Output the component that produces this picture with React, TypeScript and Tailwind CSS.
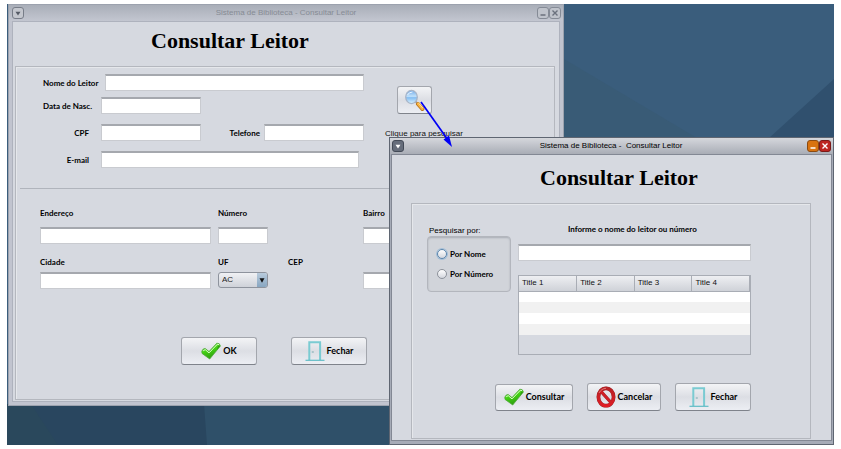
import type { ReactNode } from "react";

const sans = "font-['Liberation_Sans',Arial,sans-serif]";
const field =
  "block h-[17px] min-w-0 border border-t-2 border-[#c9cbd0] border-t-[#a5a8ae] bg-white px-1 text-[8px] text-black outline-none";
const pushButton =
  "flex items-center justify-center rounded-[3px] border border-[#a3a6ad] border-b-[#7f838b] bg-linear-to-b from-[#f3f4f6] via-[#dcdee4] to-[#eceef3] text-[9px] font-bold text-black";

function Check() {
  return (
    <svg viewBox="0 0 20 18" className="h-[18px] w-5 shrink-0" aria-hidden="true">
      <defs>
        <linearGradient id="leaf" x1="0" y1="0" x2="0.4" y2="1">
          <stop offset="0" stopColor="#a5ee7e" />
          <stop offset="0.5" stopColor="#43d413" />
          <stop offset="1" stopColor="#2e9c10" />
        </linearGradient>
      </defs>
      <path
        d="M.8 9.2Q1.6 6.6 4.1 6.4L8 9.6 15.8 1.2Q18.8 .8 19.4 4L8.7 17 1 11.4Z"
        fill="url(#leaf)"
        stroke="#4fa83b"
        strokeWidth=".8"
        strokeLinejoin="round"
      />
      <path d="M2.2 8.8 4.2 7.6 8 10.9 16.3 2.3 18 2.6" fill="none" stroke="#d9ffc6" strokeWidth="1" />
      <path d="M19.2 4 16 7.8 17 3.4Z" fill="#23790f" opacity=".6" />
    </svg>
  );
}

function Door() {
  return (
    <svg viewBox="0 0 20 20" className="size-5 shrink-0" fill="none" aria-hidden="true">
      <path d="M4.3 19V1.2h10.8V19" stroke="#7acbd2" strokeWidth="2" />
      <path d="M.5 19.3h19" stroke="#5fbcc5" strokeWidth="1.2" />
      <path d="M6.8 11h2" stroke="#5d9ba2" strokeWidth=".8" />
    </svg>
  );
}

function Forbidden() {
  return (
    <svg viewBox="0 0 20 22" className="h-[22px] w-5 shrink-0" fill="none" aria-hidden="true">
      <defs>
        <linearGradient id="red" x1="0" y1="0" x2="0" y2="1">
          <stop offset="0" stopColor="#b82226" />
          <stop offset="1" stopColor="#e01c24" />
        </linearGradient>
      </defs>
      <ellipse cx="10" cy="11" rx="7.6" ry="8.7" stroke="#9c2226" strokeWidth="3.8" />
      <path d="M4.8 5.2 15.2 16.8" stroke="#9c2226" strokeWidth="3.2" />
      <ellipse cx="10" cy="11" rx="7.6" ry="8.7" stroke="url(#red)" strokeWidth="3" />
      <path d="M4.8 5.2 15.2 16.8" stroke="#d02026" strokeWidth="2.6" />
      <path d="M3 7Q5.4 2.6 10 2.3" stroke="#e88d8d" strokeWidth=".8" />
    </svg>
  );
}

function Magnifier() {
  return (
    <svg viewBox="0 0 22 22" className="size-[22px]" aria-hidden="true">
      <defs>
        <linearGradient id="lens" x1="0" y1="0" x2="0" y2="1">
          <stop offset="0" stopColor="#6fa9ea" />
          <stop offset="0.45" stopColor="#c2e2fb" />
          <stop offset="0.55" stopColor="#84bdf2" />
          <stop offset="1" stopColor="#d9f2ff" />
        </linearGradient>
      </defs>
      <path d="m11.5 12.5 3 3" stroke="#9ba0a8" strokeWidth="2" />
      <path d="m14 15 4.4 5" stroke="#b9731b" strokeWidth="4" strokeLinecap="round" />
      <path d="m14.2 14.8 4.2 4.8" stroke="#f9b440" strokeWidth="2.8" strokeLinecap="round" />
      <path d="m14.8 14.4 4 4.6" stroke="#ffe2a0" strokeWidth="1" />
      <ellipse cx="7.5" cy="8" rx="5.8" ry="6.6" fill="url(#lens)" stroke="#a8b5c8" strokeWidth="1.3" />
      <path d="M3.5 6Q5 3 8.5 3" stroke="#eaf5ff" fill="none" />
    </svg>
  );
}

type FrameProps = { active?: boolean; place: string; children: ReactNode };

function Frame({ active = false, place, children }: FrameProps) {
  const control = "flex size-3 items-center justify-center rounded-[3px] border";
  return (
    <section
      className={`absolute flex flex-col border ${place} ${
        active ? "border-[#5f6672] bg-[#a6abb7] px-px pb-[3px]" : "border-[#9ca2ae] bg-[#c1c4cf] px-[3px] pb-[3px]"
      }`}
    >
      <header
        className={`grid h-4 shrink-0 grid-cols-[1fr_auto_1fr] items-center bg-linear-to-b ${
          active ? "-mx-px pr-0.5 pl-px from-[#d5d7dc] to-[#a9adb6]" : "-mx-[3px] px-0.5 from-[#a9aeb8] to-[#c3c6d0]"
        }`}
      >
        <button
          type="button"
          aria-label="Menu da janela"
          className={`${control} ml-px ${active ? "border-[#434a57] bg-[#666d7b]" : "border-[#777d88] bg-[#c4c7ce]"}`}
        >
          <svg viewBox="0 0 6 5" className="h-[5px] w-1.5" aria-hidden="true">
            <path d="M.5.8h5L3 4.6Z" fill={active ? "#fff" : "#555b66"} />
          </svg>
        </button>
        <h2
          className={`text-[8px] leading-4 font-normal whitespace-pre ${sans} ${active ? "text-black" : "text-[#868b94]"}`}
        >
          {active ? "Sistema de Biblioteca -  Consultar Leitor" : "Sistema de Biblioteca - Consultar Leitor"}
        </h2>
        <div className="flex justify-end">
          <button
            type="button"
            aria-label="Minimizar"
            className={`${control} ${active ? "border-[#8b4a10] bg-[#d9730f]" : "border-[#858b96] bg-[#bfc3cb]"}`}
          >
            <svg viewBox="0 0 8 8" className="size-2" aria-hidden="true">
              <path d="M1.5 6h5" stroke={active ? "#fff" : "#6b717d"} strokeWidth="1.5" />
            </svg>
          </button>
          <button
            type="button"
            aria-label="Fechar janela"
            className={`${control} ${active ? "border-[#7c1a18] bg-[#bd2521]" : "border-[#858b96] bg-[#bfc3cb]"}`}
          >
            <svg viewBox="0 0 8 8" className="size-2" aria-hidden="true">
              <path d="m1.5 1.5 5 5m0-5-5 5" stroke={active ? "#fff" : "#6b717d"} strokeWidth="1.4" />
            </svg>
          </button>
        </div>
      </header>
      <div
        className={`flex min-h-0 flex-1 flex-col border bg-[#d6d9e0] ${active ? "border-[#838894]" : "border-[#aeb2bd]"}`}
      >
        {children}
      </div>
    </section>
  );
}

const title = "font-['Liberation_Serif','Times_New_Roman',serif] text-[22px] font-bold leading-7 text-black";

function ReaderWindow() {
  return (
    <Frame place="left-px top-0 h-[402px] w-[556px]">
      <h1 className={`${title} mt-[5px] pl-[138px]`}>Consultar Leitor</h1>
      <form className="mr-1 mt-[11px] mb-px ml-0.5 flex flex-1 flex-col border border-[#b4b7be] pr-1 pl-1 shadow-[inset_1px_1px_0_#e5e7eb]">
        <div className="flex">
          <div className="flex w-[365px] flex-col pt-[7px] pl-[23px]">
            <div className="flex items-center">
              <label htmlFor="nome" className="w-[62px]">Nome do Leitor</label>
              <input id="nome" className={`${field} w-[259px]`} />
            </div>
            <div className="mt-1.5 flex items-center">
              <label htmlFor="nasc" className="w-[58px]">Data de Nasc.</label>
              <input id="nasc" className={`${field} w-[100px]`} />
            </div>
            <div className="mt-2.5 flex items-center">
              <label htmlFor="cpf" className="w-[58px] pr-3 text-right">CPF</label>
              <input id="cpf" className={`${field} w-[100px]`} />
              <label htmlFor="fone" className="w-[63px] pr-1 text-right">Telefone</label>
              <input id="fone" className={`${field} w-[100px]`} />
            </div>
            <div className="mt-2.5 flex items-center">
              <label htmlFor="email" className="w-[58px] pr-3 text-right">E-mail</label>
              <input id="email" className={`${field} w-[258px]`} />
            </div>
          </div>
          <div className="flex flex-col pt-[19px]">
            <button type="button" aria-label="Pesquisar" className={`${pushButton} ml-3 h-7 w-[35px]`}>
              <Magnifier />
            </button>
            <p className={`mt-3.5 text-[8px] leading-3 font-normal whitespace-nowrap text-[#111] ${sans}`}>
              Clique para pesquisar
            </p>
          </div>
        </div>
        <hr className="mt-5 border-t border-[#b0b4bc]" />
        <div className="grid grid-cols-[178px_70px_75px_1fr] pt-[18px] pl-5">
          <label htmlFor="endereco">Endereço</label>
          <label htmlFor="numero" className="col-span-2">Número</label>
          <label htmlFor="bairro">Bairro</label>
          <input id="endereco" className={`${field} mt-2 w-[171px]`} />
          <input id="numero" className={`${field} col-span-2 mt-2 w-[50px]`} />
          <input id="bairro" className={`${field} mt-2 w-[140px]`} />
          <label htmlFor="cidade" className="mt-3">Cidade</label>
          <label htmlFor="uf" className="mt-3">UF</label>
          <label htmlFor="cep" className="col-span-2 mt-3">CEP</label>
          <input id="cidade" className={`${field} mt-1 w-[171px]`} />
          <div className="relative col-span-2 mt-1 h-4 w-[50px]">
            <select
              id="uf"
              className={`block h-4 w-full appearance-none rounded-[3px] border border-[#8e939d] bg-linear-to-b from-[#f0f1f4] to-[#cfd2d9] pl-[3px] text-[8px] font-normal text-[#222] ${sans}`}
            >
              <option>AC</option>
            </select>
            <span className="pointer-events-none absolute top-px right-px flex h-3.5 w-2.5 items-center justify-center rounded-r-[2px] bg-linear-to-b from-[#b9cbdc] to-[#88a6c1]">
              <svg viewBox="0 0 6 5" className="h-[5px] w-1.5" aria-hidden="true">
                <path d="M.5.3h5L3 4.8Z" fill="#111" />
              </svg>
            </span>
          </div>
          <input id="cep" className={`${field} mt-1 w-[140px]`} />
        </div>
        <div className="mt-12 flex gap-[34px] pl-[161px]">
          <button type="button" className={`${pushButton} h-7 w-[76px] gap-0.5`}>
            <Check />
            OK
          </button>
          <button type="button" className={`${pushButton} h-7 w-[76px] gap-0.5`}>
            <Door />
            Fechar
          </button>
        </div>
      </form>
    </Frame>
  );
}

function Radio({ id, text, focused = false }: { id: string; text: string; focused?: boolean }) {
  return (
    <div className="flex h-5 items-center gap-[3px]">
      <input
        id={id}
        type="radio"
        name="criterio"
        className={`size-2.5 appearance-none rounded-full border bg-linear-to-b from-white to-[#d3d6dd] ${
          focused ? "border-[#5a85ad] shadow-[0_0_0_1px_#a4bfd8]" : "border-[#8d929b]"
        }`}
      />
      <label htmlFor={id}>{text}</label>
    </div>
  );
}

function SearchWindow() {
  const columns = ["Title 1", "Title 2", "Title 3", "Title 4"];
  const rows = ["bg-white", "bg-[#f1f1f1]", "bg-white", "bg-[#f1f1f1]"];
  return (
    <Frame active place="left-[382px] top-[133px] h-[308px] w-[445px]">
      <h1 className={`${title} mt-[9px] pl-[148px]`}>Consultar Leitor</h1>
      <form className="mt-[11px] mr-5 mb-px ml-[19px] flex flex-1 flex-col border border-[#b4b7be] shadow-[inset_1px_1px_0_#e5e7eb]">
        <div className="flex pt-[19px] pl-[15px]">
          <fieldset className="w-[84px]">
            <legend className={`pt-0.5 pl-0.5 text-[8px] leading-[11px] font-normal ${sans}`}>Pesquisar por:</legend>
            <div className="h-14 rounded-[4px] border border-[#b3b6bd] bg-[#d1d4da] pt-[7px] pl-[9px] shadow-[inset_0_1px_2px_#a9adb5]">
              <Radio id="por-nome" text="Por Nome" focused />
              <Radio id="por-numero" text="Por Número" />
            </div>
          </fieldset>
          <div className="ml-[7px] w-[233px]">
            <label htmlFor="termo" className="block pl-[50px]">Informe o nome do leitor ou número</label>
            <input id="termo" className={`${field} mt-[9px] w-full`} />
            <div className="mt-[14px] h-20 border border-[#a9adb5]">
              <table className="w-full table-fixed border-collapse">
                <thead>
                  <tr className="h-[15px] bg-linear-to-b from-[#eeeff2] to-[#cfd2d8]">
                    {columns.map((name) => (
                      <th
                        key={name}
                        className={`border-r border-b border-[#a9adb5] p-0 pl-[3px] text-left text-[8px] leading-[14px] font-normal text-[#111] ${sans}`}
                      >
                        {name}
                      </th>
                    ))}
                  </tr>
                </thead>
                <tbody>
                  {rows.map((tone, index) => (
                    <tr key={index} className={`h-[11px] ${tone}`}>
                      {columns.map((name) => (
                        <td key={name} className="p-0" />
                      ))}
                    </tr>
                  ))}
                </tbody>
              </table>
            </div>
          </div>
        </div>
        <div className="mt-7 flex items-center gap-3.5 pl-[83px]">
          <button type="button" className={`${pushButton} h-[27px] w-[78px] gap-0.5`}>
            <Check />
            Consultar
          </button>
          <button type="button" className={`${pushButton} h-7 w-[74px] gap-0.5`}>
            <Forbidden />
            Cancelar
          </button>
          <button type="button" className={`${pushButton} h-7 w-[76px] gap-0.5`}>
            <Door />
            Fechar
          </button>
        </div>
      </form>
    </Frame>
  );
}

export default function App() {
  return (
    <div className="h-screen bg-white px-[7px] py-1 font-['Lato','Liberation_Sans',sans-serif] text-[8px] leading-3 font-bold text-black">
      <main className="relative h-full overflow-hidden bg-[#3a5d7c]">
        <svg viewBox="0 0 827 441" preserveAspectRatio="none" className="absolute inset-0 size-full" aria-hidden="true">
          <path d="M557 55 690 134H557Z" fill="#395b76" />
          <path d="M827 75 762 134V441H827Z" fill="#30506e" />
          <path d="M0 400h400v41H0Z" fill="#2f5069" />
          <path d="M0 400h197l3 41H0Z" fill="#29465f" />
          <path d="M0 400h24l27 41H0Z" fill="#2a485c" />
        </svg>
        <ReaderWindow />
        <SearchWindow />
        <svg viewBox="0 0 36 50" className="absolute top-[96px] left-[411px] h-[50px] w-9" aria-hidden="true">
          <path d="M3 2 30 40" stroke="#0000f5" strokeWidth="1.7" />
          <path d="M34 47 25.5 39.5 31 35.5Z" fill="#0000f5" />
        </svg>
      </main>
    </div>
  );
}
